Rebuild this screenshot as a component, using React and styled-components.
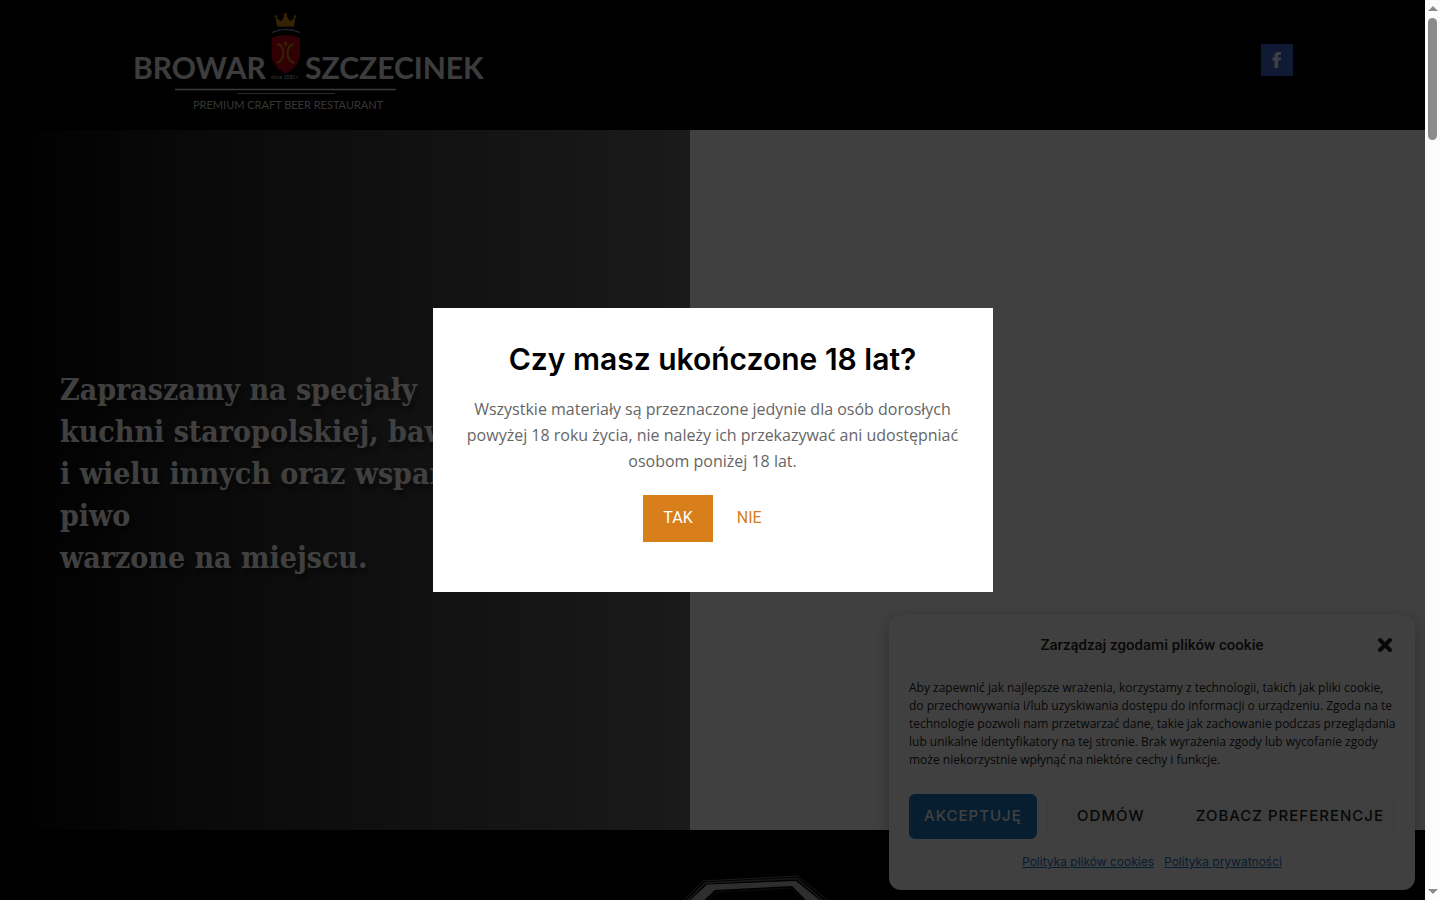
import styled, { createGlobalStyle } from "styled-components";

const GlobalStyle = createGlobalStyle`
    * {
        box-sizing: border-box;
    }
    body {
        margin: 0;
        background: #ffffff;
        font-family: Inter, "Liberation Sans", sans-serif;
        font-size: 16px;
        color: #666666;
    }
    h1, h2, p {
        margin: 0;
    }
`;

const Window = styled.div`
    display: flex;
    height: 100vh;
    overflow: hidden;
`;

const Viewport = styled.div`
    position: relative;
    flex: 1;
    min-width: 0;
    overflow: hidden;
`;

const ScrollTrack = styled.div`
    display: flex;
    flex-direction: column;
    align-items: center;
    justify-content: space-between;
    width: 15px;
    padding: 6px 0;
    background: #fcfcfc;
`;

const ScrollThumb = styled.div`
    width: 9px;
    height: 122px;
    margin-top: 7px;
    margin-bottom: auto;
    border-radius: 5px;
    background: #8b8b8b;
`;

const ScrollArrow = styled.div`
    border: 5px solid transparent;
    border-top-width: ${({ $up }) => ($up ? 0 : 5)}px;
    border-bottom-width: ${({ $up }) => ($up ? 5 : 0)}px;
    border-${({ $up }) => ($up ? "bottom" : "top")}-color: #8b8b8b;
`;

const StyledHeader = styled.header`
    display: flex;
    align-items: center;
    justify-content: space-between;
    height: 130px;
    padding: 0 132px 10px;
    background: #000000;
`;

const LogoLink = styled.a`
    display: block;
    line-height: 0;
`;

const SocialLink = styled.a`
    display: flex;
    align-items: center;
    justify-content: center;
    width: 32px;
    height: 32px;
    background: #4267cd;
`;

const Hero = styled.section`
    display: flex;
    height: 700px;
`;

const HeroPanel = styled.div`
    display: flex;
    align-items: center;
    flex: 0 0 690px;
    padding: 0 60px 12px;
    background: linear-gradient(90deg, #000000, #242424 26%, #6a6a6a);
`;

const HeroTitle = styled.h1`
    font-family: "Roboto Slab", "DejaVu Serif Condensed", "DejaVu Serif", serif;
    font-size: 30px;
    font-weight: 700;
    line-height: 42px;
    white-space: nowrap;
    color: #ffffff;
    text-shadow: 2px 5px 5px rgba(0, 0, 0, 0.5);
`;

const Footer = styled.section`
    display: flex;
    justify-content: center;
    padding: 44px 0 0 86px;
    height: 300px;
    background: #000000;
`;

const Overlay = styled.div`
    position: absolute;
    inset: 0;
    display: flex;
    align-items: center;
    justify-content: center;
    background: rgba(0, 0, 0, 0.75);
`;

const Modal = styled.div`
    width: 560px;
    padding: 30px 30px 50px;
    background: #ffffff;
    text-align: center;
`;

const ModalTitle = styled.h2`
    font-size: 30px;
    font-weight: 600;
    line-height: 42px;
    color: #000000;
`;

const ModalText = styled.p`
    margin: 16px 0 21px;
    font-family: "Open Sans", sans-serif;
    line-height: 26px;
`;

const ModalActions = styled.div`
    display: flex;
    justify-content: center;
    gap: 4px;
`;

const AgeButton = styled.button`
    height: 47px;
    padding: 0 20px 2px;
    border: 0;
    background: ${({ $filled }) => ($filled ? "#d87f1b" : "transparent")};
    color: ${({ $filled }) => ($filled ? "#ffffff" : "#d87f1b")};
    font-family: Roboto, sans-serif;
    font-size: 16px;
`;

const CookieBox = styled.aside`
    position: absolute;
    right: 10px;
    bottom: 10px;
    width: 526px;
    padding: 16px 20px 19px;
    border-radius: 12px;
    background: #ffffff;
    box-shadow: 0 4px 16px rgba(0, 0, 0, 0.3);
    color: #222222;
`;

const CookieHead = styled.div`
    display: grid;
    grid-template-columns: 20px 1fr 20px;
    align-items: center;
    height: 28px;
    text-align: center;
`;

const CookieTitle = styled.h2`
    grid-column: 2;
    font-family: Roboto, sans-serif;
    font-size: 15px;
    font-weight: 500;
    line-height: 20px;
`;

const CloseButton = styled.button`
    padding: 0;
    border: 0;
    background: none;
    line-height: 0;
`;

const CookieText = styled.p`
    margin: 20px 0 25px;
    font-family: "Open Sans", sans-serif;
    font-size: 12px;
    line-height: 18px;
    white-space: nowrap;
`;

const CookieButtons = styled.div`
    display: grid;
    grid-template-columns: 1fr 1fr auto;
    gap: 10px;
`;

const CookieButton = styled.button`
    height: 45px;
    padding: 0 10px 2px;
    border: 1px solid ${({ $primary }) => ($primary ? "#1e73be" : "#f2f2f2")};
    border-radius: 6px;
    background: ${({ $primary }) => ($primary ? "#1e73be" : "#f9f9f9")};
    color: ${({ $primary }) => ($primary ? "#ffffff" : "#222222")};
    font-family: inherit;
    font-size: 15px;
    font-weight: 500;
    letter-spacing: 1px;
    text-transform: uppercase;
`;

const CookieLinks = styled.nav`
    display: flex;
    justify-content: center;
    gap: 10px;
    margin-top: 14px;
    font-size: 12px;
    line-height: 18px;

    a {
        color: #1e73be;
    }
`;

const Logo = () => (
    <svg width="370" height="104" viewBox="0 0 370 104" role="img" aria-label="Browar Szczecinek">
        <g fill="#f0f0f0" fontFamily="Lato, sans-serif" fontSize="30" fontWeight="700">
            <text x="1" y="71">BROWAR</text>
            <text x="173" y="71">SZCZECINEK</text>
        </g>
        <g fill="#d0d0d0" fontFamily="Lato, sans-serif">
            <text x="139" y="71" fontSize="5">since 1880 r.</text>
            <text x="61" y="101" fontSize="11">PREMIUM CRAFT BEER RESTAURANT</text>
        </g>
        <path d="M43 81.500H264" stroke="#e8e8e8" strokeWidth="1.500" />
        <path d="M105 85.500H203" stroke="#a8a8a8" strokeWidth="1" />
        <path
            d="M145 18.500L143.500 9L149 13.500L153.500 6L158 13.500L163.500 9L162 18.500Z"
            fill="#d09010"
        />
        <g fill="#d09010">
            <circle cx="144" cy="8.500" r="1.300" />
            <circle cx="153.500" cy="6.500" r="1.600" />
            <circle cx="163" cy="8.500" r="1.300" />
        </g>
        <path d="M140 24.500Q153.500 18.500 168 24.500" fill="none" stroke="#a8b4bc" strokeWidth="1.200" />
        <path
            d="M139.500 30Q153.500 24 168 30V49Q167 58 153.500 65.500Q140.500 58 139.500 49Z"
            fill="#c00010"
        />
        <g fill="none" stroke="#d09010" strokeWidth="2">
            <path d="M145 36Q151 37 151.500 45Q151 53 145 55" />
            <path d="M162 36Q156 37 155.500 45Q156 53 162 55" />
            <path d="M153.500 33V39M150.500 36H156.500" strokeWidth="1.200" />
        </g>
    </svg>
);

const Emblem = () => (
    <svg width="150" height="120" viewBox="0 0 150 120" aria-hidden="true">
        <g fill="none" stroke="#666666">
            <path d="M-3 32L22 7L117 2L150 29" />
            <path d="M1 32L24 9L116 4.500L146 30" strokeWidth="1.500" />
        </g>
        <path d="M3 32L26 10.500L115 7L146 32H131L111 12L34 16L17 32Z" fill="#b8b8b8" />
        <path d="M20 32L36 18L110 14L127 32" fill="none" stroke="#333333" />
    </svg>
);

const CookieBanner = () => (
    <CookieBox aria-labelledby="cookie-title">
        <CookieHead>
            <CookieTitle id="cookie-title">Zarządzaj zgodami plików cookie</CookieTitle>
            <CloseButton type="button" aria-label="Zamknij">
                <svg width="20" height="20" viewBox="0 0 20 20">
                    <path
                        d="M5 5L15 15M15 5L5 15"
                        stroke="#222222"
                        strokeWidth="4"
                        strokeLinecap="round"
                    />
                </svg>
            </CloseButton>
        </CookieHead>
        <CookieText>
            Aby zapewnić jak najlepsze wrażenia, korzystamy z technologii, takich jak pliki cookie,<br />
            do przechowywania i/lub uzyskiwania dostępu do informacji o urządzeniu. Zgoda na te<br />
            technologie pozwoli nam przetwarzać dane, takie jak zachowanie podczas przeglądania<br />
            lub unikalne identyfikatory na tej stronie. Brak wyrażenia zgody lub wycofanie zgody<br />
            może niekorzystnie wpłynąć na niektóre cechy i funkcje.
        </CookieText>
        <CookieButtons>
            <CookieButton type="button" $primary>Akceptuję</CookieButton>
            <CookieButton type="button">Odmów</CookieButton>
            <CookieButton type="button">Zobacz preferencje</CookieButton>
        </CookieButtons>
        <CookieLinks>
            <a href="#cookies">Polityka plików cookies</a>
            <a href="#privacy">Polityka prywatności</a>
        </CookieLinks>
    </CookieBox>
);

const AgeGate = () => (
    <Overlay>
        <Modal role="dialog" aria-labelledby="age-title">
            <ModalTitle id="age-title">Czy masz ukończone 18 lat?</ModalTitle>
            <ModalText>
                Wszystkie materiały są przeznaczone jedynie dla osób dorosłych<br />
                powyżej 18 roku życia, nie należy ich przekazywać ani udostępniać<br />
                osobom poniżej 18 lat.
            </ModalText>
            <ModalActions>
                <AgeButton type="button" $filled>TAK</AgeButton>
                <AgeButton type="button">NIE</AgeButton>
            </ModalActions>
        </Modal>
    </Overlay>
);

const App = () => {
    return <>
        <GlobalStyle />
        <Window>
            <Viewport>
                <StyledHeader>
                    <LogoLink href="#home"><Logo /></LogoLink>
                    <SocialLink href="#facebook" aria-label="Facebook">
                        <svg width="10" height="18" viewBox="0 0 10 18">
                            <path
                                d="M2.500 17V9.500H0.500V6.500H2.500V4.800Q2.500 1 6.300 1H9V4H7.200Q6 4 6 5.200V6.500H9L8.600 9.500H6V17Z"
                                fill="#ffffff"
                            />
                        </svg>
                    </SocialLink>
                </StyledHeader>
                <Hero>
                    <HeroPanel>
                        <HeroTitle>
                            Zapraszamy na specjały<br />
                            kuchni staropolskiej, bawarskiej<br />
                            i wielu innych oraz wspaniałe<br />
                            piwo<br />
                            warzone na miejscu.
                        </HeroTitle>
                    </HeroPanel>
                </Hero>
                <Footer><Emblem /></Footer>
                <CookieBanner />
                <AgeGate />
            </Viewport>
            <ScrollTrack>
                <ScrollArrow $up />
                <ScrollThumb />
                <ScrollArrow />
            </ScrollTrack>
        </Window>
    </>
}

export default App
